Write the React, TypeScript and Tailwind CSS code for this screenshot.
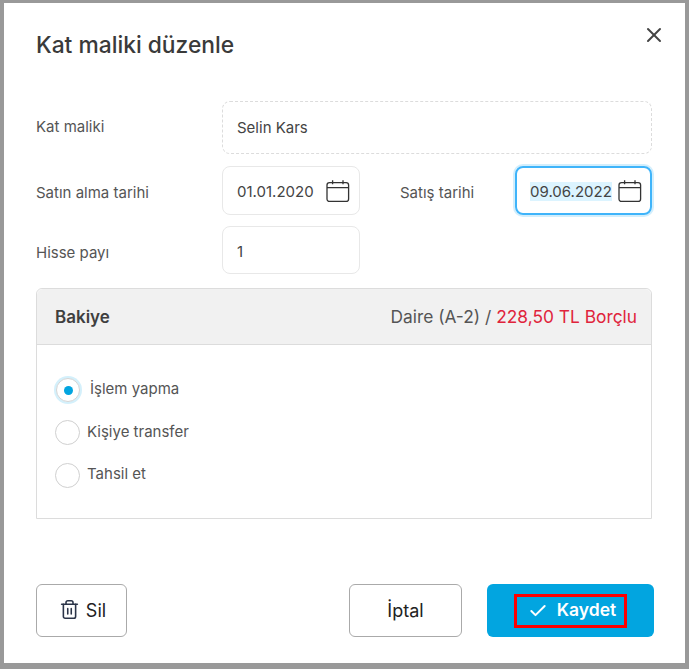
import { X, Trash2, Check } from "lucide-react";

function CalendarIcon() {
  return (
    <svg width="24" height="24" viewBox="0 0 24 24" fill="none" stroke="#333" strokeWidth="1.3" className="shrink-0">
      <rect x="1" y="3.6" width="21.6" height="18.8" rx="2.5" />
      <path d="M1 8.6h21.6M6.6 1.2v4M17 1.2v4" />
    </svg>
  );
}

function Radio({ label, checked, gap }: { label: string; checked?: boolean; gap: string }) {
  return (
    <div className={`flex h-6 items-center ${gap}`}>
      {checked ? (
        <span className="ml-px flex h-[24px] w-[24px] items-center justify-center rounded-full border border-[#d5d5d5] bg-white shadow-[0_0_0_2px_#d4f0fb]">
          <span className="h-[9px] w-[9px] rounded-full bg-[#02a5e0]" />
        </span>
      ) : (
        <span className="h-[25px] w-[25px] rounded-full border border-[#d0d0d0] bg-white" />
      )}
      <span className="-translate-y-px text-[15px] leading-5 text-[#555]">{label}</span>
    </div>
  );
}

export default function App() {
  return (
    <div className="h-[669px] w-[689px] bg-[#999] pb-[6px] pl-[4px] pr-[4px] pt-[3px] font-['Inter',sans-serif]">
      <div className="relative h-full w-full bg-white pl-[32px] pr-[33px] pt-[29px]">
        <button className="absolute right-[19px] top-[20px] text-[#444]">
          <X size={24} strokeWidth={2} />
        </button>
        <h1 className="text-[22.8px] font-medium leading-[26px] text-[#3a3a3a]">Kat maliki düzenle</h1>

        <div className="mt-[43px] flex items-center">
          <label className="w-[186px] -translate-y-px text-[15px] leading-5 text-[#555]">Kat maliki</label>
          <div className="flex h-[53px] flex-1 items-center rounded-lg border border-dashed border-[#dcdcdc] px-[14px] text-[15px] text-[#444]">
            <span className="translate-y-px">Selin Kars</span>
          </div>
        </div>

        <div className="mt-[12px] flex items-center">
          <label className="w-[186px] translate-y-[2px] text-[15px] leading-5 text-[#555]">Satın alma tarihi</label>
          <div className="flex h-[49px] w-[138px] items-center justify-between rounded-lg border border-[#e8e8e8] pl-[14px] pr-[9px] text-[15px] text-[#444]">
            <span className="translate-y-[2px]">01.01.2020</span>
            <CalendarIcon />
          </div>
          <label className="ml-[40px] w-[115px] translate-y-[2px] text-[15px] leading-5 text-[#555]">Satış tarihi</label>
          <div className="flex h-[49px] w-[137px] items-center justify-between rounded-lg border-2 border-[#3fb4fa] pl-[13px] pr-[8px] text-[15px] text-[#444] shadow-[0_0_0_2px_#d2eefc]">
            <span className="translate-y-px bg-[#dcf4ff] leading-[19px]">09.06.2022</span>
            <CalendarIcon />
          </div>
        </div>

        <div className="mt-[11px] flex items-center">
          <label className="w-[186px] translate-y-[3px] text-[15px] leading-5 text-[#555]">Hisse payı</label>
          <div className="flex h-[48px] w-[138px] items-center rounded-lg border border-[#e8e8e8] px-[14px] text-[15px] text-[#444]">
            <span className="translate-y-[2px]">1</span>
          </div>
        </div>

        <section className="mt-[14px] h-[231px] rounded-t-md border border-[#dcdcdc]">
          <div className="flex h-[56px] items-center justify-between rounded-t-md border-b border-[#dcdcdc] bg-[#f1f1f1] pl-[18px] pr-[14px]">
            <span className="translate-y-px text-[17px] font-semibold text-[#3f3f3f]">Bakiye</span>
            <span className="translate-y-px text-[17.35px] text-[#555]">
              Daire (A-2) / <span className="text-[#e0243c]">228,50 TL Borçlu</span>
            </span>
          </div>
          <div className="flex flex-col gap-[18.5px] pl-[18px] pt-[33px]">
            <Radio label="İşlem yapma" checked gap="gap-[10px]" />
            <Radio label="Kişiye transfer" gap="gap-[7px]" />
            <Radio label="Tahsil et" gap="gap-[7px]" />
          </div>
        </section>

        <footer className="mt-[65px] flex items-center -mr-[2px]">
          <button className="flex h-[53px] w-[91px] items-center justify-center gap-[6px] rounded-md border border-[#aaa] bg-white pl-[2px] text-[18px] text-[#222]">
            <Trash2 size={21} strokeWidth={1.8} className="-translate-y-px text-[#2b3448]" />
            Sil
          </button>
          <button className="ml-auto h-[53px] w-[113px] rounded-md border border-[#aaa] bg-white text-[18px] text-[#222]">
            İptal
          </button>
          <button className="ml-[25px] flex h-[53px] w-[167px] items-center justify-center rounded-md bg-[#02a5e0] text-white">
            <span className="flex h-[34px] w-[113px] items-center justify-center gap-[9px] border-[3px] border-[#ff0000] pl-[3px] text-[17.5px] font-semibold">
              <Check size={20} strokeWidth={2.4} />
              Kaydet
            </span>
          </button>
        </footer>
      </div>
    </div>
  );
}
